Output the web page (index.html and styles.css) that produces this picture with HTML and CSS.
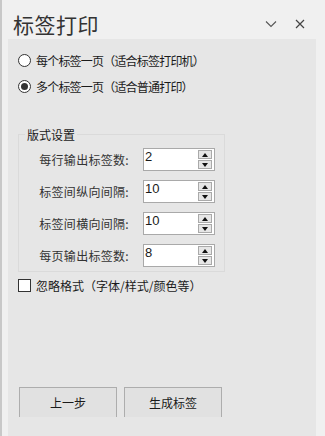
FILE: index.html
```html
<!DOCTYPE html>
<html lang="zh-CN">
<head>
    <meta charset="UTF-8">
    <title>标签打印</title>
    <link rel="stylesheet" href="styles.css">
</head>
<body>
    <div class="pane">
        <div class="header">
            <h1>标签打印</h1>
            <div class="tools">
                <svg width="12" height="8" viewBox="0 0 12 8"><path d="M1 1.5 L6 6.5 L11 1.5" fill="none" stroke="#555" stroke-width="1.1"/></svg>
                <svg width="10" height="10" viewBox="0 0 10 10"><path d="M1 1 L9 9 M9 1 L1 9" fill="none" stroke="#444" stroke-width="1.2"/></svg>
            </div>
        </div>
        <div class="panel">
            <label class="option radio-row"><span class="radio"></span>每个标签一页（适合标签打印机）</label>
            <label class="option radio-row"><span class="radio checked"></span>多个标签一页（适合普通打印）</label>

            <fieldset class="group">
                <legend>版式设置</legend>
                <div class="row">
                    <span class="name">每行输出标签数:</span>
                    <div class="spin"><span class="value">2</span><div class="arrows"><span class="up"></span><span class="down"></span></div></div>
                </div>
                <div class="row">
                    <span class="name">标签间纵向间隔:</span>
                    <div class="spin"><span class="value">10</span><div class="arrows"><span class="up"></span><span class="down"></span></div></div>
                </div>
                <div class="row">
                    <span class="name">标签间横向间隔:</span>
                    <div class="spin"><span class="value">10</span><div class="arrows"><span class="up"></span><span class="down"></span></div></div>
                </div>
                <div class="row">
                    <span class="name">每页输出标签数:</span>
                    <div class="spin"><span class="value">8</span><div class="arrows"><span class="up"></span><span class="down"></span></div></div>
                </div>
            </fieldset>

            <label class="option check-row"><span class="check"></span>忽略格式（字体/样式/颜色等）</label>

            <div class="buttons">
                <button type="button">上一步</button>
                <button type="button">生成标签</button>
            </div>
        </div>
    </div>
</body>
</html>
```

FILE: styles.css
```css
body {
    margin: 0;
    background: #f0f0f0;
    font-family: "Noto Sans CJK SC", "Liberation Sans", sans-serif;
    color: #1a1a1a;
}
.pane {
    height: 436px;
    border-left: 2px solid #c8c8c8;
    display: flex;
    flex-direction: column;
}
.header {
    height: 39px;
    display: flex;
    align-items: center;
    justify-content: space-between;
    padding: 8px 20px 0 11px;
    box-sizing: border-box;
}
h1 {
    margin: 0;
    font-size: 21px;
    font-weight: normal;
    color: #333;
    letter-spacing: 0.5px;
}
.tools {
    display: flex;
    align-items: center;
    gap: 18px;
}
.panel {
    flex: 1;
    margin-left: 6px;
    width: 308px;
    background: #e6e6e6;
    display: flex;
    flex-direction: column;
    padding: 13px 0 0 10px;
    box-sizing: border-box;
}
.option {
    display: flex;
    align-items: center;
    gap: 5px;
    font-size: 12px;
    height: 16px;
    margin-bottom: 10px;
}
.radio-row {
    letter-spacing: -0.8px;
}
.radio {
    width: 11px;
    height: 11px;
    border: 1px solid #333;
    border-radius: 50%;
    background: #fff;
    display: flex;
    align-items: center;
    justify-content: center;
}
.radio.checked::after {
    content: "";
    width: 7px;
    height: 7px;
    border-radius: 50%;
    background: #333;
}
.group {
    margin: 22px 0 0 0;
    width: 207px;
    border: 1px solid #dadada;
    padding: 0;
    box-sizing: border-box;
}
legend {
    font-size: 12px;
    padding: 0 2px;
    margin-left: 6px;
}
.row {
    display: flex;
    align-items: center;
    height: 23px;
    margin-top: 9px;
}
.row:first-of-type {
    margin-top: 5px;
}
.row:last-child {
    margin-bottom: 4px;
}
.name {
    width: 124px;
    text-align: right;
    padding-right: 14px;
    box-sizing: border-box;
    font-size: 12px;
    letter-spacing: 0.3px;
    color: #333;
}
.spin {
    width: 72px;
    height: 23px;
    border: 1px solid #a9a9a9;
    background: #fff;
    display: flex;
    box-sizing: border-box;
}
.value {
    flex: 1;
    font-family: "Liberation Sans", sans-serif;
    font-size: 13px;
    line-height: 16px;
    padding-left: 1px;
}
.arrows {
    width: 14px;
    margin: 1px 2px 1px 0;
    display: flex;
    flex-direction: column;
    gap: 1px;
}
.arrows span {
    flex: 1;
    background: #e6e6e6;
    border: 1px solid #a9a9a9;
    display: flex;
    align-items: center;
    justify-content: center;
}
.up::after {
    content: "";
    border-left: 3.5px solid transparent;
    border-right: 3.5px solid transparent;
    border-bottom: 4px solid #111;
}
.down::after {
    content: "";
    border-left: 3.5px solid transparent;
    border-right: 3.5px solid transparent;
    border-top: 4px solid #111;
}
.check-row {
    margin-top: 5px;
}
.check {
    width: 11px;
    height: 11px;
    border: 1px solid #333;
    background: #fff;
}
.buttons {
    margin-top: auto;
    margin-bottom: 19px;
    display: flex;
    gap: 7px;
    padding-left: 1px;
}
button {
    width: 98px;
    height: 30px;
    background: #e1e1e1;
    border: 1px solid #adadad;
    border-bottom: none;
    font-family: "Noto Sans CJK SC", sans-serif;
    font-size: 12px;
    color: #1a1a1a;
}
```
